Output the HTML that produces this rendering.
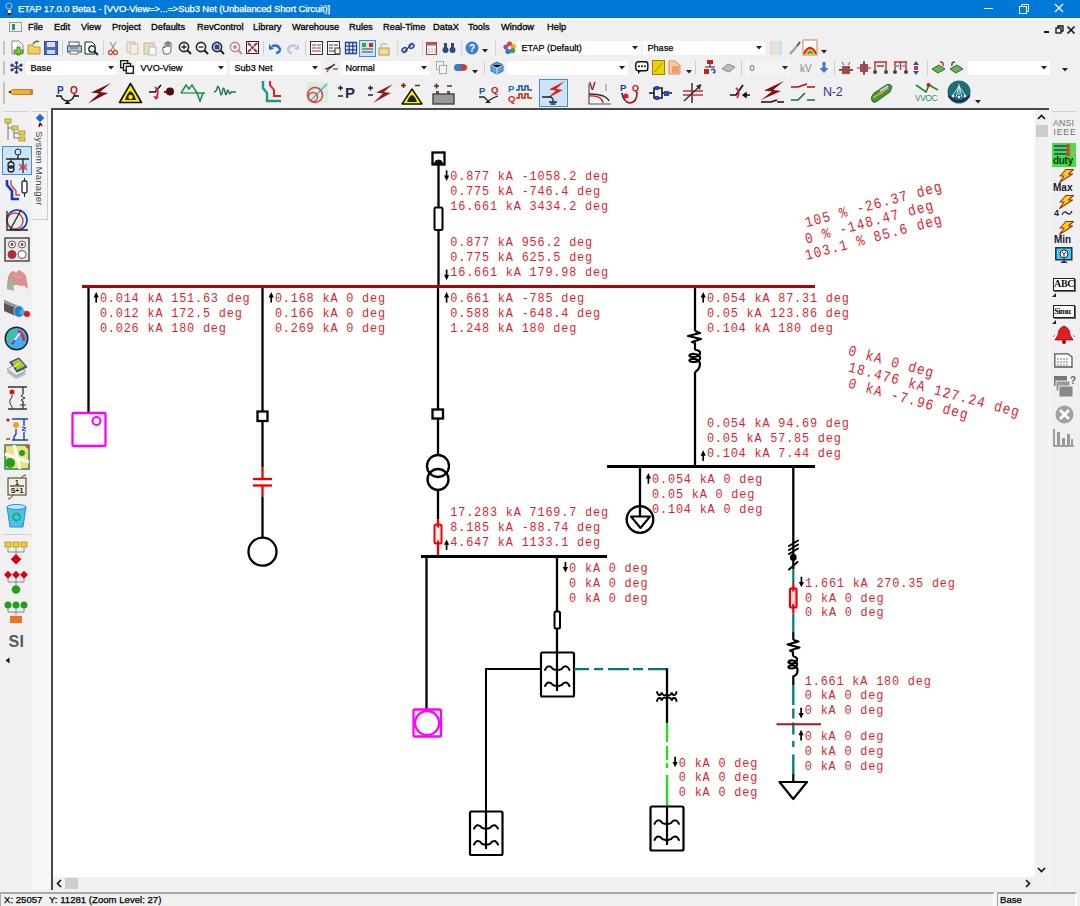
<!DOCTYPE html>
<html><head><meta charset="utf-8">
<style>
*{margin:0;padding:0;box-sizing:border-box}
html,body{width:1080px;height:906px;overflow:hidden;background:#f0f0f0;font-family:"Liberation Sans",sans-serif;position:relative}
.a{position:absolute}
svg{overflow:visible}
</style></head><body>
<div class="a" style="left:0px;top:0px;width:1080px;height:18px;background:#0078d7"></div>
<svg class="a" style="left:4px;top:2px" width="12" height="14" viewBox="0 0 12 14"><circle cx="5" cy="4" r="3" fill="none" stroke="#8fb4e0" stroke-width="1.2"/><rect x="4" y="8" width="3" height="3" fill="#fff"/><rect x="4" y="11" width="3" height="2" fill="#700"/></svg>
<div class="a" style="left:18px;top:2.5px;white-space:nowrap;color:#fff;font-size:9.4px;line-height:12px;letter-spacing:-0.08px;-webkit-text-stroke:0.25px #fff">ETAP 17.0.0 Beta1 - [VVO-View=&gt;...=&gt;Sub3 Net (Unbalanced Short Circuit)]</div>
<div class="a" style="left:984px;top:8px;width:8.5px;height:1.3px;background:#fff"></div>
<svg class="a" style="left:1017.5px;top:2.5px" width="12" height="12" viewBox="0 0 12 12"><rect x="1.5" y="3.5" width="7" height="7" fill="none" stroke="#fff" stroke-width="1"/><path d="M3.5 3.5V1.5H10.5V8.5H8.5" fill="none" stroke="#fff" stroke-width="1"/></svg>
<svg class="a" style="left:1054px;top:3px" width="10" height="10" viewBox="0 0 10 10"><path d="M1 1L9 9M9 1L1 9" stroke="#fff" stroke-width="1.2"/></svg>
<div class="a" style="left:0px;top:18px;width:1080px;height:1.5px;background:#fff"></div>
<svg class="a" style="left:9px;top:22px" width="14" height="11" viewBox="0 0 14 11"><rect x="0.5" y="0.5" width="12" height="9" fill="#eef2ee" stroke="#999"/><rect x="3" y="2" width="3" height="6" fill="#3a8a5a"/></svg>
<div class="a" style="left:28px;top:21.3px;white-space:nowrap;font-size:9.3px;color:#000;line-height:12px;letter-spacing:0px;-webkit-text-stroke:0.3px #000">File</div>
<div class="a" style="left:54px;top:21.3px;white-space:nowrap;font-size:9.3px;color:#000;line-height:12px;letter-spacing:0px;-webkit-text-stroke:0.3px #000">Edit</div>
<div class="a" style="left:81px;top:21.3px;white-space:nowrap;font-size:9.3px;color:#000;line-height:12px;letter-spacing:0px;-webkit-text-stroke:0.3px #000">View</div>
<div class="a" style="left:112px;top:21.3px;white-space:nowrap;font-size:9.3px;color:#000;line-height:12px;letter-spacing:0px;-webkit-text-stroke:0.3px #000">Project</div>
<div class="a" style="left:151px;top:21.3px;white-space:nowrap;font-size:9.3px;color:#000;line-height:12px;letter-spacing:0px;-webkit-text-stroke:0.3px #000">Defaults</div>
<div class="a" style="left:197px;top:21.3px;white-space:nowrap;font-size:9.3px;color:#000;line-height:12px;letter-spacing:0px;-webkit-text-stroke:0.3px #000">RevControl</div>
<div class="a" style="left:253px;top:21.3px;white-space:nowrap;font-size:9.3px;color:#000;line-height:12px;letter-spacing:0px;-webkit-text-stroke:0.3px #000">Library</div>
<div class="a" style="left:292px;top:21.3px;white-space:nowrap;font-size:9.3px;color:#000;line-height:12px;letter-spacing:0px;-webkit-text-stroke:0.3px #000">Warehouse</div>
<div class="a" style="left:349px;top:21.3px;white-space:nowrap;font-size:9.3px;color:#000;line-height:12px;letter-spacing:0px;-webkit-text-stroke:0.3px #000">Rules</div>
<div class="a" style="left:383px;top:21.3px;white-space:nowrap;font-size:9.3px;color:#000;line-height:12px;letter-spacing:0px;-webkit-text-stroke:0.3px #000">Real-Time</div>
<div class="a" style="left:433px;top:21.3px;white-space:nowrap;font-size:9.3px;color:#000;line-height:12px;letter-spacing:0px;-webkit-text-stroke:0.3px #000">DataX</div>
<div class="a" style="left:468px;top:21.3px;white-space:nowrap;font-size:9.3px;color:#000;line-height:12px;letter-spacing:0px;-webkit-text-stroke:0.3px #000">Tools</div>
<div class="a" style="left:501px;top:21.3px;white-space:nowrap;font-size:9.3px;color:#000;line-height:12px;letter-spacing:0px;-webkit-text-stroke:0.3px #000">Window</div>
<div class="a" style="left:547px;top:21.3px;white-space:nowrap;font-size:9.3px;color:#000;line-height:12px;letter-spacing:0px;-webkit-text-stroke:0.3px #000">Help</div>
<div class="a" style="left:1043.5px;top:30.5px;width:5px;height:2px;background:#111"></div>
<svg class="a" style="left:1055px;top:25px" width="10" height="10" viewBox="0 0 10 10"><rect x="1" y="3" width="5" height="5" fill="none" stroke="#111" stroke-width="1.3"/><path d="M3 3V1H8V6H6" fill="none" stroke="#111" stroke-width="1.3"/></svg>
<svg class="a" style="left:1066px;top:25px" width="10" height="10" viewBox="0 0 10 10"><path d="M1.5 1.5L8.5 8.5M8.5 1.5L1.5 8.5" stroke="#111" stroke-width="1.6"/></svg>
<div class="a" style="left:3px;top:41px;width:2px;height:14px;background:#c4c4c4"></div>
<svg class="a" style="left:11px;top:40px" width="13" height="15" viewBox="0 0 13 15"><path d="M1 1H8L12 5V14H1Z" fill="#fff" stroke="#888"/><path d="M6 7H9V10H12V13H9V15H6V13H3V10H6Z" fill="#7acc2a" stroke="#3b6e10" stroke-width="0.8"/></svg>
<svg class="a" style="left:27px;top:40px" width="14" height="15" viewBox="0 0 14 15"><path d="M1 5H6L7 7H13V14H1Z" fill="#f0d060" stroke="#b89a30"/><path d="M6 4Q9 0 12 2" stroke="#2a7a2a" stroke-width="1.4" fill="none"/></svg>
<svg class="a" style="left:44px;top:41px" width="14" height="14" viewBox="0 0 14 14"><rect x="0.5" y="0.5" width="13" height="13" fill="#4a6cc0" stroke="#2c4a9a"/><rect x="3" y="1" width="8" height="5" fill="#dde"/><rect x="3" y="9" width="8" height="4" fill="#cdd"/></svg>
<div class="a" style="left:62px;top:41px;width:1px;height:14px;background:#cfcfcf"></div>
<svg class="a" style="left:67px;top:41px" width="15" height="14" viewBox="0 0 15 14"><rect x="2" y="1" width="10" height="4" fill="#fff" stroke="#555"/><rect x="0.5" y="5" width="14" height="6" fill="#b8c4d4" stroke="#555"/><rect x="3" y="6" width="8" height="2" fill="#4aa0e0"/><rect x="3" y="10" width="8" height="3" fill="#fff" stroke="#555" stroke-width="0.8"/></svg>
<svg class="a" style="left:84px;top:41px" width="15" height="15" viewBox="0 0 15 15"><path d="M1 1H8L11 4V13H1Z" fill="#fff" stroke="#223"/><circle cx="8" cy="8" r="3.2" fill="#cfe" stroke="#223" stroke-width="1.3"/><path d="M10 10L14 14" stroke="#223" stroke-width="1.8"/></svg>
<div class="a" style="left:103px;top:41px;width:1px;height:14px;background:#cfcfcf"></div>
<svg class="a" style="left:108px;top:41px" width="10" height="14" viewBox="0 0 10 14"><path d="M2 1L7 9M8 1L3 9" stroke="#999" stroke-width="1.2"/><circle cx="2.5" cy="11.5" r="2" fill="none" stroke="#d05030" stroke-width="1.3"/><circle cx="7.5" cy="11.5" r="2" fill="none" stroke="#d05030" stroke-width="1.3"/></svg>
<svg class="a" style="left:126px;top:41px" width="13" height="14" viewBox="0 0 13 14"><rect x="1" y="1" width="8" height="10" fill="#f4efe0" stroke="#cbbf99"/><rect x="4" y="3" width="8" height="10" fill="#f4efe0" stroke="#cbbf99"/></svg>
<svg class="a" style="left:143px;top:41px" width="14" height="14" viewBox="0 0 14 14"><rect x="1" y="2" width="10" height="11" fill="#e8dcc0" stroke="#c8b890"/><rect x="6" y="6" width="7" height="8" fill="#f6f6f6" stroke="#bbb"/></svg>
<svg class="a" style="left:161px;top:41px" width="12" height="14" viewBox="0 0 12 14"><path d="M3 13Q1 8 2 6Q3 5 4 7V2Q5 1 6 2V6V1Q7 0 8 1V6V2Q9 1 10 2V9Q10 13 7 13Z" fill="#fff" stroke="#555" stroke-width="0.9"/></svg>
<svg class="a" style="left:178px;top:41px" width="14" height="14" viewBox="0 0 14 14"><circle cx="6" cy="6" r="4.6" fill="#fff" stroke="#223" stroke-width="1.6"/><path d="M9.3 9.3L13 13" stroke="#223" stroke-width="2"/><path d="M3.5 6H8.5M6 3.5V8.5" stroke="#223" stroke-width="1.3"/></svg>
<svg class="a" style="left:195px;top:41px" width="14" height="14" viewBox="0 0 14 14"><circle cx="6" cy="6" r="4.6" fill="#fff" stroke="#223" stroke-width="1.6"/><path d="M9.3 9.3L13 13" stroke="#223" stroke-width="2"/><path d="M3.5 6H8.5" stroke="#223" stroke-width="1.3"/></svg>
<svg class="a" style="left:211px;top:41px" width="14" height="14" viewBox="0 0 14 14"><circle cx="6" cy="6" r="4.6" fill="#fff" stroke="#223" stroke-width="1.6"/><path d="M9.3 9.3L13 13" stroke="#223" stroke-width="2"/><rect x="3.5" y="3.5" width="5" height="5" fill="#2050a0"/></svg>
<svg class="a" style="left:229px;top:41px" width="14" height="14" viewBox="0 0 14 14"><circle cx="6" cy="6" r="4.6" fill="#fff" stroke="#b89090" stroke-width="1.6"/><path d="M9.3 9.3L13 13" stroke="#b89090" stroke-width="2"/><circle cx="6" cy="6" r="2" fill="#e08080"/></svg>
<svg class="a" style="left:246px;top:41px" width="13" height="13" viewBox="0 0 13 13"><rect x="0.5" y="0.5" width="12" height="12" fill="#fff" stroke="#223"/><path d="M2 2L5 5M11 2L8 5M2 11L5 8M11 11L8 8" stroke="#d02020" stroke-width="2"/><circle cx="6.5" cy="6.5" r="1.5" fill="#2050a0"/></svg>
<div class="a" style="left:263px;top:41px;width:1px;height:14px;background:#cfcfcf"></div>
<svg class="a" style="left:269px;top:42px" width="13" height="12" viewBox="0 0 13 12"><path d="M3 4Q9 2 11 7Q11 11 7 11" fill="none" stroke="#3070c0" stroke-width="2.4"/><path d="M0 2L5 7L0 8Z" fill="#3070c0"/></svg>
<svg class="a" style="left:286px;top:42px" width="13" height="12" viewBox="0 0 13 12"><path d="M10 4Q4 2 2 7Q2 11 6 11" fill="none" stroke="#b8c8e0" stroke-width="2.4"/><path d="M13 2L8 7L13 8Z" fill="#b8c8e0"/></svg>
<div class="a" style="left:305px;top:41px;width:1px;height:14px;background:#cfcfcf"></div>
<svg class="a" style="left:310px;top:41px" width="13" height="14" viewBox="0 0 13 14"><rect x="0.5" y="0.5" width="12" height="13" fill="#fff" stroke="#333"/><path d="M2 4H6M2 7H6M2 10H11M7 4H11M7 7H11" stroke="#c02020" stroke-width="1.2"/></svg>
<svg class="a" style="left:327px;top:41px" width="14" height="14" viewBox="0 0 14 14"><rect x="0.5" y="0.5" width="12" height="13" fill="#fff" stroke="#333"/><path d="M2 4H6M2 7H6M2 10H8M7 4H11" stroke="#333" stroke-width="1.2"/><rect x="8" y="7" width="5" height="6" fill="#eee" stroke="#333"/></svg>
<svg class="a" style="left:345px;top:42px" width="12" height="12" viewBox="0 0 12 12"><path d="M0.5 0.5H11.5V11.5H0.5ZM4.2 0.5V11.5M7.8 0.5V11.5M0.5 4.2H11.5M0.5 7.8H11.5" fill="none" stroke="#2040a0" stroke-width="1.3"/></svg>
<svg class="a" style="left:359px;top:40px" width="17" height="17" viewBox="0 0 17 17"><rect x="0.5" y="0.5" width="16" height="16" fill="#cde4f7" stroke="#3d8fd8"/><rect x="3" y="3" width="4" height="4" fill="#3a3" /><rect x="10" y="3" width="4" height="4" fill="#d22"/><path d="M3 9H14M3 12H14" stroke="#444"/></svg>
<svg class="a" style="left:378px;top:42px" width="12" height="13" viewBox="0 0 12 13"><rect x="1" y="6" width="10" height="7" fill="#eedd99" stroke="#bb9955"/><path d="M3 6V3Q6 0 9 3" fill="none" stroke="#bbb" stroke-width="1.4"/></svg>
<div class="a" style="left:397px;top:41px;width:1px;height:14px;background:#cfcfcf"></div>
<svg class="a" style="left:402px;top:42px" width="12" height="12" viewBox="0 0 12 12"><path d="M2 10L10 2" stroke="#3a60a0" stroke-width="1.3"/><rect x="0" y="6" width="5" height="4" rx="2" transform="rotate(-45 2.5 8)" fill="none" stroke="#2a4a90" stroke-width="1.6"/><rect x="7" y="2" width="5" height="4" rx="2" transform="rotate(-45 9.5 4)" fill="none" stroke="#2a4a90" stroke-width="1.6"/></svg>
<div class="a" style="left:422px;top:41px;width:1px;height:14px;background:#cfcfcf"></div>
<svg class="a" style="left:426px;top:42px" width="11" height="13" viewBox="0 0 11 13"><rect x="0.5" y="0.5" width="10" height="12" fill="#fff" stroke="#a04040"/><rect x="0.5" y="0.5" width="10" height="3" fill="#d05050"/><path d="M3 6V11M6 6V11M9 6V11" stroke="#a8a8a8"/></svg>
<svg class="a" style="left:442px;top:42px" width="14" height="12" viewBox="0 0 14 12"><circle cx="3.5" cy="8" r="3" fill="#2a4a80"/><circle cx="10.5" cy="8" r="3" fill="#2a4a80"/><rect x="2" y="1" width="3" height="5" fill="#2a4a80"/><rect x="9" y="1" width="3" height="5" fill="#2a4a80"/></svg>
<div class="a" style="left:461px;top:41px;width:1px;height:14px;background:#cfcfcf"></div>
<svg class="a" style="left:465px;top:41px" width="14" height="14" viewBox="0 0 14 14"><circle cx="7" cy="7" r="6.5" fill="#3d7fd0"/><text x="7" y="11" font-size="10" font-weight="bold" text-anchor="middle" fill="#fff" font-family="Liberation Sans">?</text></svg>
<svg class="a" style="left:482px;top:49px" width="6" height="4" viewBox="0 0 6 4"><path d="M0 0H6L3 3.5Z" fill="#222"/></svg>
<div class="a" style="left:495px;top:41px;width:1px;height:14px;background:#cfcfcf"></div>
<svg class="a" style="left:503px;top:41px" width="13" height="13" viewBox="0 0 13 13"><circle cx="6.5" cy="3" r="2.6" fill="#e04030"/><circle cx="10" cy="5.5" r="2.6" fill="#f0a020"/><circle cx="9.5" cy="9.5" r="2.6" fill="#40a040"/><circle cx="5" cy="10.5" r="2.6" fill="#2080d0"/><circle cx="3" cy="6" r="2.6" fill="#a040c0"/><circle cx="6.5" cy="6.5" r="1.6" fill="#fff"/></svg>
<div class="a" style="left:517px;top:41px;width:124px;height:14px;background:#fff"></div>
<div class="a" style="left:521.5px;top:42.5px;white-space:nowrap;font-size:9.1px;color:#000;line-height:11px;-webkit-text-stroke:0.25px #000">ETAP (Default)</div>
<svg class="a" style="left:632px;top:46.0px" width="6" height="4" viewBox="0 0 6 4"><path d="M0 0H6L3 3.5Z" fill="#222"/></svg>
<div class="a" style="left:643px;top:41px;width:122px;height:14px;background:#fff"></div>
<div class="a" style="left:647.5px;top:42.5px;white-space:nowrap;font-size:9.1px;color:#000;line-height:11px;-webkit-text-stroke:0.25px #000">Phase</div>
<svg class="a" style="left:756px;top:46.0px" width="6" height="4" viewBox="0 0 6 4"><path d="M0 0H6L3 3.5Z" fill="#222"/></svg>
<svg class="a" style="left:770px;top:41px" width="12" height="14" viewBox="0 0 12 14"><defs><linearGradient id="gr1"><stop offset="0" stop-color="#f8d0d0"/><stop offset="0.5" stop-color="#d8f0d0"/><stop offset="1" stop-color="#d0d8f8"/></linearGradient></defs><rect x="0" y="0" width="12" height="14" fill="url(#gr1)"/></svg>
<svg class="a" style="left:788px;top:41px" width="13" height="14" viewBox="0 0 13 14"><path d="M2 13L9 5" stroke="#9aa" stroke-width="2.5"/><path d="M9 5L12 1" stroke="#555" stroke-width="2"/></svg>
<svg class="a" style="left:803px;top:40px" width="14" height="15" viewBox="0 0 14 15"><rect x="0" y="0" width="14" height="15" fill="#fff"/><path d="M1 14Q7 2 13 14" fill="none" stroke="#e02020" stroke-width="2.5"/><path d="M3 14Q7 6 11 14" fill="none" stroke="#f0c000" stroke-width="2"/><path d="M5 14Q7 10 9 14" fill="none" stroke="#20a040" stroke-width="2"/><rect x="0" y="0" width="14" height="15" fill="none" stroke="#c84"/></svg>
<svg class="a" style="left:821px;top:50px" width="6" height="4" viewBox="0 0 6 4"><path d="M0 0H6L3 3.5Z" fill="#222"/></svg>
<div class="a" style="left:3px;top:61px;width:2px;height:14px;background:#c4c4c4"></div>
<svg class="a" style="left:10px;top:61px" width="13" height="13" viewBox="0 0 13 13"><path d="M6.5 1V12M1.5 4L11.5 9M11.5 4L1.5 9" stroke="#2a4070" stroke-width="1.1"/><circle cx="6.5" cy="1.8" r="1.6" fill="#2a4070"/><circle cx="6.5" cy="11.2" r="1.6" fill="#2a4070"/><circle cx="2" cy="4.2" r="1.6" fill="#2a4070"/><circle cx="11" cy="4.2" r="1.6" fill="#2a4070"/><circle cx="2" cy="8.8" r="1.6" fill="#2a4070"/><circle cx="11" cy="8.8" r="1.6" fill="#2a4070"/><circle cx="6.5" cy="6.5" r="1.3" fill="#2a4070"/></svg>
<div class="a" style="left:26px;top:61px;width:91px;height:14px;background:#fff"></div>
<div class="a" style="left:30.5px;top:62.5px;white-space:nowrap;font-size:9.1px;color:#000;line-height:11px;-webkit-text-stroke:0.25px #000">Base</div>
<svg class="a" style="left:108px;top:66.0px" width="6" height="4" viewBox="0 0 6 4"><path d="M0 0H6L3 3.5Z" fill="#222"/></svg>
<svg class="a" style="left:120px;top:60px" width="14" height="14" viewBox="0 0 14 14"><rect x="0.7" y="0.7" width="7" height="7" fill="#fff" stroke="#111" stroke-width="1.3"/><rect x="3.5" y="3.5" width="7" height="7" fill="#fff" stroke="#111" stroke-width="1.3"/><rect x="6.3" y="6.3" width="7" height="7" fill="#fff" stroke="#111" stroke-width="1.3"/></svg>
<div class="a" style="left:136px;top:61px;width:91px;height:14px;background:#fff"></div>
<div class="a" style="left:140.5px;top:62.5px;white-space:nowrap;font-size:9.1px;color:#000;line-height:11px;-webkit-text-stroke:0.25px #000">VVO-View</div>
<svg class="a" style="left:218px;top:66.0px" width="6" height="4" viewBox="0 0 6 4"><path d="M0 0H6L3 3.5Z" fill="#222"/></svg>
<div class="a" style="left:230px;top:61px;width:91px;height:14px;background:#fff"></div>
<div class="a" style="left:234.5px;top:62.5px;white-space:nowrap;font-size:9.1px;color:#000;line-height:11px;-webkit-text-stroke:0.25px #000">Sub3 Net</div>
<svg class="a" style="left:312px;top:66.0px" width="6" height="4" viewBox="0 0 6 4"><path d="M0 0H6L3 3.5Z" fill="#222"/></svg>
<svg class="a" style="left:325px;top:63px" width="13" height="10" viewBox="0 0 13 10"><path d="M0 6H4L10 1M8 6H13" stroke="#333" stroke-width="1.2"/><path d="M2 9L4 5" stroke="#d03030" stroke-width="1.2"/></svg>
<div class="a" style="left:341px;top:61px;width:89px;height:14px;background:#fff"></div>
<div class="a" style="left:345.5px;top:62.5px;white-space:nowrap;font-size:9.1px;color:#000;line-height:11px;-webkit-text-stroke:0.25px #000">Normal</div>
<svg class="a" style="left:421px;top:66.0px" width="6" height="4" viewBox="0 0 6 4"><path d="M0 0H6L3 3.5Z" fill="#222"/></svg>
<svg class="a" style="left:436px;top:61px" width="11" height="13" viewBox="0 0 11 13"><rect x="0.5" y="0.5" width="7" height="8" fill="#f0f0f0" stroke="#aaa"/><rect x="3.5" y="4.5" width="7" height="8" fill="#f6f6f6" stroke="#aaa"/></svg>
<svg class="a" style="left:454px;top:63px" width="14" height="9" viewBox="0 0 14 9"><rect x="0" y="1" width="12" height="7" rx="3.5" fill="#3a7ac8"/><circle cx="10" cy="4.5" r="3" fill="#e03030"/></svg>
<svg class="a" style="left:472px;top:70px" width="6" height="4" viewBox="0 0 6 4"><path d="M0 0H6L3 3.5Z" fill="#222"/></svg>
<div class="a" style="left:484px;top:61px;width:1px;height:14px;background:#cfcfcf"></div>
<svg class="a" style="left:490px;top:61px" width="14" height="14" viewBox="0 0 14 14"><path d="M7 1L13 4V10L7 13L1 10V4Z" fill="#5aa0e0" stroke="#2a70c0"/><path d="M1 4L7 7L13 4M7 7V13" stroke="#fff" stroke-width="0.8"/></svg>
<div class="a" style="left:507px;top:61px;width:121px;height:14px;background:#fff"></div>
<svg class="a" style="left:619px;top:66.0px" width="6" height="4" viewBox="0 0 6 4"><path d="M0 0H6L3 3.5Z" fill="#222"/></svg>
<svg class="a" style="left:635px;top:61px" width="14" height="13" viewBox="0 0 14 13"><rect x="0.8" y="0.8" width="12" height="9" rx="2.5" fill="#fff" stroke="#111" stroke-width="1.4"/><path d="M3 10L3 13L6 10" fill="#111"/><circle cx="4" cy="5.3" r="1" fill="#111"/><circle cx="7" cy="5.3" r="1" fill="#111"/><circle cx="10" cy="5.3" r="1" fill="#111"/></svg>
<svg class="a" style="left:652px;top:60px" width="13" height="15" viewBox="0 0 13 15"><rect x="0.5" y="0.5" width="12" height="14" fill="#f0d000" stroke="#a08000"/><path d="M3 12L10 3" stroke="#a08000"/></svg>
<svg class="a" style="left:668px;top:60px" width="13" height="15" viewBox="0 0 13 15"><path d="M1 1H7L12 5V14H1Z" fill="#f8c8a0" stroke="#e09060"/><rect x="4" y="6" width="7" height="7" fill="#f0a070"/></svg>
<svg class="a" style="left:686px;top:70px" width="6" height="4" viewBox="0 0 6 4"><path d="M0 0H6L3 3.5Z" fill="#222"/></svg>
<div class="a" style="left:695px;top:61px;width:1px;height:14px;background:#cfcfcf"></div>
<svg class="a" style="left:703px;top:60px" width="14" height="15" viewBox="0 0 14 15"><rect x="4" y="0" width="6" height="4" fill="#c02020"/><path d="M7 4V7M2 7H12" stroke="#222"/><rect x="1" y="9" width="5" height="5" fill="#c02020"/><path d="M8 10Q12 8 12 12L10 13" fill="none" stroke="#2050b0" stroke-width="1.5"/></svg>
<svg class="a" style="left:721px;top:63px" width="15" height="10" viewBox="0 0 15 10"><path d="M1 6L7 1L14 4L8 9Z" fill="#bbb" stroke="#888"/></svg>
<div class="a" style="left:741px;top:61px;width:1px;height:14px;background:#cfcfcf"></div>
<div class="a" style="left:745px;top:61px;width:46px;height:14px;background:#f4f4f4"></div>
<div class="a" style="left:749.5px;top:62.5px;white-space:nowrap;font-size:9.1px;color:#777;line-height:11px;-webkit-text-stroke:0.25px #777">0</div>
<svg class="a" style="left:782px;top:66.0px" width="6" height="4" viewBox="0 0 6 4"><path d="M0 0H6L3 3.5Z" fill="#222"/></svg>
<div class="a" style="left:800px;top:63px;white-space:nowrap;font-size:10px;color:#888;line-height:11px">kV</div>
<svg class="a" style="left:819px;top:62px" width="10" height="12" viewBox="0 0 10 12"><path d="M5 0V7" stroke="#4a70e0" stroke-width="3"/><path d="M0.5 6H9.5L5 11Z" fill="#4a70e0"/></svg>
<div class="a" style="left:834px;top:61px;width:1px;height:14px;background:#cfcfcf"></div>
<svg class="a" style="left:839px;top:61px" width="14" height="14" viewBox="0 0 14 14"><path d="M3 1L5 4M11 1L9 4" stroke="#3050c0"/><rect x="3" y="5" width="8" height="3" fill="#c04040"/><path d="M0 9H14" stroke="#333" stroke-width="1.5"/><rect x="3" y="10" width="8" height="3" fill="#c04040"/></svg>
<svg class="a" style="left:857px;top:61px" width="14" height="14" viewBox="0 0 14 14"><path d="M7 0V14" stroke="#333" stroke-width="1.5"/><rect x="3" y="3" width="3" height="8" fill="#c04040"/><rect x="8" y="3" width="3" height="8" fill="#c04040"/><path d="M0 7H3M11 7H14" stroke="#3050c0"/></svg>
<svg class="a" style="left:873px;top:61px" width="15" height="14" viewBox="0 0 15 14"><path d="M1 1H14M2 1V9M13 1V9M4 5H11" stroke="#c03030" stroke-width="1.4"/><circle cx="2" cy="11" r="2" fill="#444"/><circle cx="13" cy="11" r="2" fill="#444"/></svg>
<svg class="a" style="left:893px;top:61px" width="15" height="14" viewBox="0 0 15 14"><path d="M1 1H14M2 1V9M13 1V9M7.5 1V9" stroke="#c03030" stroke-width="1.4"/><path d="M3 5H6M9 5H12" stroke="#3050c0"/><circle cx="2" cy="11" r="2" fill="#444"/><circle cx="13" cy="11" r="2" fill="#444"/></svg>
<svg class="a" style="left:912px;top:61px" width="8" height="14" viewBox="0 0 8 14"><path d="M4 0L7 4H1Z M4 14L7 10H1Z" fill="#3050c0"/><rect x="2" y="5" width="4" height="4" fill="#c04040"/></svg>
<div class="a" style="left:927px;top:61px;width:1px;height:14px;background:#cfcfcf"></div>
<svg class="a" style="left:931px;top:61px" width="15" height="14" viewBox="0 0 15 14"><path d="M1 8L8 4L14 8L7 12Z" fill="#6cb060" stroke="#2a6a2a"/><path d="M9 1Q13 1 12 5" fill="none" stroke="#c03030" stroke-width="1.5"/></svg>
<svg class="a" style="left:949px;top:61px" width="15" height="14" viewBox="0 0 15 14"><path d="M1 8L8 4L14 8L7 12Z" fill="#6cb060" stroke="#2a6a2a"/><path d="M6 1Q2 1 3 5" fill="none" stroke="#3050a0" stroke-width="1.5"/></svg>
<div class="a" style="left:968px;top:61px;width:82px;height:14px;background:#fff"></div>
<svg class="a" style="left:1041px;top:66.0px" width="6" height="4" viewBox="0 0 6 4"><path d="M0 0H6L3 3.5Z" fill="#222"/></svg>
<svg class="a" style="left:1062px;top:68px" width="6" height="4" viewBox="0 0 6 4"><path d="M0 0H6L3 3.5Z" fill="#222"/></svg>
<div class="a" style="left:3px;top:82px;width:2px;height:22px;background:#c4c4c4"></div>
<svg class="a" style="left:8px;top:88px" width="26" height="8" viewBox="0 0 26 8"><path d="M0.5 4L5 1.5H24V6.5H5Z" fill="#f0b030" stroke="#b07010" stroke-width="0.8"/><path d="M0.5 4L3 2.8V5.2Z" fill="#222"/><rect x="22" y="1.5" width="3" height="5" fill="#c08060"/></svg>
<svg class="a" style="left:55px;top:84px" width="26" height="21" viewBox="0 0 26 21"><text x="2" y="10" font-family="Liberation Sans" font-weight="bold" font-size="10" fill="#1a3a9a">P</text><text x="15" y="10" font-family="Liberation Sans" font-weight="bold" font-size="10" fill="#b01020">Q</text><path d="M1 12H6Q8 17 12.5 17Q17 17 19 12H24" fill="none" stroke="#111" stroke-width="1.4"/><path d="M9.5 20H15.5L12.5 16.5Z" fill="#111"/></svg>
<svg class="a" style="left:87px;top:82px" width="24" height="22" viewBox="0 0 24 22"><path d="M24 1L4 10.5L12 11.5L1 21.5L21 11L13 10Z" fill="#7a1010"/></svg>
<svg class="a" style="left:118px;top:82px" width="25" height="22" viewBox="0 0 25 22"><path d="M12.5 1.5L23.5 20.5H1.5Z" fill="#f8f000" stroke="#111" stroke-width="1.6" stroke-linejoin="round"/><path d="M7 18Q9 11 12.5 9Q16 11 18 18Z" fill="#222"/><circle cx="12.5" cy="15" r="2.2" fill="#f8f000"/></svg>
<svg class="a" style="left:148px;top:82px" width="27" height="20" viewBox="0 0 27 20"><path d="M1 10H7L13 3" stroke="#111" stroke-width="1.6" fill="none"/><path d="M7 5Q12 9 8 16" stroke="#e02030" stroke-width="1.8" fill="none"/><path d="M5 14L8 18L11 15Z" fill="#e02030"/><path d="M16 10H19" stroke="#111" stroke-width="1.6"/><circle cx="22" cy="9.5" r="4" fill="#5a0a0a"/></svg>
<svg class="a" style="left:180px;top:83px" width="26" height="19" viewBox="0 0 26 19"><path d="M1 10L6 2L9 6L12 2L17 10H25M17 10L20 18L23 10L25 10" fill="none" stroke="#1a8a4a" stroke-width="1.5"/><path d="M1 10H17" stroke="#1a8a4a" stroke-width="1.2"/></svg>
<svg class="a" style="left:213px;top:83px" width="24" height="17" viewBox="0 0 24 17"><path d="M1 9Q3 9 4 6Q5 0 7 8Q8 16 9.5 8Q10.5 2 12 9Q13 14 14 9Q15 5 16 10Q17 12 18 9L23 9" fill="none" stroke="#1a7a4a" stroke-width="1.4"/></svg>
<svg class="a" style="left:261px;top:80px" width="22" height="24" viewBox="0 0 22 24"><path d="M2 1V8L6 13V21H20" fill="none" stroke="#1a9a8a" stroke-width="2.4"/><path d="M9 1V5L13 10V16H20" fill="none" stroke="#e02020" stroke-width="2"/></svg>
<svg class="a" style="left:306px;top:81px" width="23" height="23" viewBox="0 0 23 23"><rect x="1" y="1" width="21" height="21" fill="#d8eede"/><path d="M4 20L21 3" stroke="#4ab0d0" stroke-width="1.2"/><circle cx="9" cy="14" r="7.5" fill="none" stroke="#e04040" stroke-width="1.6"/><circle cx="7" cy="16" r="4.5" fill="none" stroke="#e04040" stroke-width="1.4"/></svg>
<svg class="a" style="left:337px;top:84px" width="23" height="15" viewBox="0 0 23 15"><path d="M1 4H6M3.5 1.5V6.5M1 12H6" stroke="#223" stroke-width="1.4"/><text x="8" y="13.5" font-family="Liberation Sans" font-weight="bold" font-size="15" fill="#1e2e4e">P</text></svg>
<svg class="a" style="left:367px;top:82px" width="26" height="22" viewBox="0 0 26 22"><path d="M1 6H6M3.5 3.5V8.5M1 13H6" stroke="#223" stroke-width="1.4"/><path d="M26 2L9 10.5L16 11.5L6 21L24 11L17 10Z" fill="#8a2020"/></svg>
<svg class="a" style="left:400px;top:82px" width="24" height="23" viewBox="0 0 24 23"><path d="M1 3.5H6M3.5 1V6M15 3.5H20" stroke="#6a2a10" stroke-width="1.6"/><path d="M12 7L22 22H2Z" fill="#f8f000" stroke="#111" stroke-width="1.4" stroke-linejoin="round"/><path d="M7 20Q9 14 12 13Q15 14 17 20Z" fill="#222"/></svg>
<svg class="a" style="left:432px;top:82px" width="23" height="23" viewBox="0 0 23 23"><path d="M2 4H7M4.5 1.5V6.5M15 4H20" stroke="#6a2a10" stroke-width="1.6"/><rect x="4" y="9" width="3" height="3" fill="#555"/><rect x="15" y="9" width="3" height="3" fill="#555"/><rect x="1" y="12" width="21" height="10" fill="#999" stroke="#444" stroke-width="1.4"/></svg>
<svg class="a" style="left:478px;top:84px" width="23" height="20" viewBox="0 0 23 20"><text x="1" y="10" font-family="Liberation Sans" font-weight="bold" font-size="9.5" fill="#1a4aaa">P</text><text x="13" y="9" font-family="Liberation Sans" font-weight="bold" font-size="9.5" fill="#c01020">Q</text><path d="M1 13H6L10 17L15 14L20 12" fill="none" stroke="#222" stroke-width="1.3"/><path d="M7 19H13L10 16Z" fill="#222"/></svg>
<svg class="a" style="left:508px;top:83px" width="25" height="20" viewBox="0 0 25 20"><rect x="7" y="1" width="17" height="18" fill="#eef4dd"/><text x="0" y="9" font-family="Liberation Sans" font-weight="bold" font-size="9.5" fill="#1a6acc">P</text><text x="0" y="19" font-family="Liberation Sans" font-weight="bold" font-size="9.5" fill="#e02030">Q</text><path d="M8 7H11V3H14V7H17V3H20V7H24" fill="none" stroke="#1a50b0" stroke-width="1.5"/><path d="M8 15H11V11H14V15H17V11H20V15H24" fill="none" stroke="#d02020" stroke-width="1.5"/></svg>
<div class="a" style="left:538.5px;top:79px;width:29px;height:28px;background:#cce4f7;border:1px solid #3d8fd8"></div>
<svg class="a" style="left:540px;top:80px" width="27" height="26" viewBox="0 0 27 26"><path d="M25 1L9 9.5L16 10.5L7 18.5L23 10L16 9Z" fill="#e01818"/><path d="M2 17H11L13 19M13 19V22M9 22H17M10.5 24H15.5" fill="none" stroke="#222" stroke-width="1.3"/></svg>
<svg class="a" style="left:588px;top:81px" width="24" height="24" viewBox="0 0 24 24"><text x="1" y="9" font-family="Liberation Sans" font-weight="bold" font-size="10" fill="#a01010">V</text><path d="M1 3V23H23" fill="none" stroke="#555" stroke-width="1.2"/><path d="M1 13Q18 13 21 20" fill="none" stroke="#333" stroke-width="1.4"/><path d="M1 15Q14 14 15 22" fill="none" stroke="#d02030" stroke-width="1.4"/><path d="M18 3V10" stroke="#888"/></svg>
<svg class="a" style="left:620px;top:82px" width="21" height="22" viewBox="0 0 21 22"><text x="0" y="9" font-family="Liberation Sans" font-weight="bold" font-size="9.5" fill="#1a3a9a">P</text><text x="12" y="9" font-family="Liberation Sans" font-weight="bold" font-size="9" fill="#a01020">Q</text><path d="M2 11Q3 20 10 21Q17 20 17 11" fill="none" stroke="#a01020" stroke-width="1.6"/><path d="M2 11Q3 16 5 18" fill="none" stroke="#1a3a9a" stroke-width="1.6"/><circle cx="6" cy="14" r="2.5" fill="#ff1010"/></svg>
<svg class="a" style="left:648px;top:85px" width="26" height="16" viewBox="0 0 26 16"><path d="M1 8H6M6 3H14V13H6ZM14 8H24" fill="none" stroke="#111" stroke-width="1.5"/><rect x="7" y="1" width="4" height="4" fill="#2a4ac0"/><rect x="7" y="11" width="4" height="4" fill="#2a4ac0"/><rect x="16" y="6" width="5" height="5" fill="#2a4ac0"/></svg>
<svg class="a" style="left:682px;top:82px" width="22" height="22" viewBox="0 0 22 22"><path d="M10 1V21" stroke="#333" stroke-width="1.5"/><path d="M1 9H21M1 13H21" stroke="#c03040" stroke-width="1.4"/><path d="M2 19L19 3" stroke="#333" stroke-width="1.4"/><path d="M19 2L14 4L18 8Z" fill="#333"/></svg>
<svg class="a" style="left:729px;top:83px" width="22" height="17" viewBox="0 0 22 17"><path d="M1 12H7L14 2" stroke="#111" stroke-width="1.7" fill="none"/><path d="M7 5Q12 9 8 15" stroke="#e02030" stroke-width="1.8" fill="none"/><path d="M14 12H21M14 12L17 10V14Z" stroke="#111" stroke-width="1.5" fill="#111"/></svg>
<svg class="a" style="left:759px;top:80px" width="26" height="24" viewBox="0 0 26 24"><path d="M25 1L5 10.5L13 11.5L2 20L22 11L14 10Z" fill="#8a0a0a"/><path d="M2 22H12L18 20M18 22H25" stroke="#111" stroke-width="1.6" fill="none"/></svg>
<svg class="a" style="left:790px;top:83px" width="26" height="20" viewBox="0 0 26 20"><path d="M1 4H8L17 1M17 4H25" stroke="#b01010" stroke-width="1.6" fill="none"/><path d="M1 17H8L15 10M17 17H25" stroke="#1a6a4a" stroke-width="1.6" fill="none"/></svg>
<div class="a" style="left:823px;top:86px;white-space:nowrap;font-size:12.5px;color:#2a3a8a;line-height:13px;letter-spacing:-0.2px">N-2</div>
<svg class="a" style="left:869px;top:82px" width="24" height="22" viewBox="0 0 24 22"><path d="M3 19Q1 15 5 11L17 3Q22 1 23 5L21 10L7 20Q4 21 3 19Z" fill="#3a9a3a" stroke="#1a5a1a" stroke-width="0.8"/><path d="M4 16L19 6" stroke="#f0a040" stroke-width="1.6"/><path d="M11 9L19 4" stroke="#bde" stroke-width="1.5"/></svg>
<svg class="a" style="left:915px;top:82px" width="25" height="20" viewBox="0 0 25 20"><path d="M1 3L11 10L14 3L23 8" stroke="#1a8a3a" stroke-width="1.6" fill="none"/><circle cx="13.5" cy="3" r="2" fill="#e01010"/><text x="0" y="19" font-family="Liberation Sans" font-size="8.5" fill="#2a8a8a" letter-spacing="-0.5">VVOC</text></svg>
<svg class="a" style="left:947px;top:80px" width="24" height="24" viewBox="0 0 24 24"><circle cx="12" cy="12" r="11.5" fill="#1e6e78"/><path d="M1 14Q12 26 23 14V17Q12 28 1 17Z" fill="#202a60"/><path d="M12 4V15M12 6L6 15M12 6L18 15M12 6L9 17M12 6L15 17" stroke="#d8eef0" stroke-width="0.9"/><circle cx="6" cy="16" r="1.3" fill="#fff"/><circle cx="18" cy="16" r="1.3" fill="#fff"/><circle cx="12" cy="17" r="1.3" fill="#fff"/></svg>
<svg class="a" style="left:975px;top:100px" width="6" height="4" viewBox="0 0 6 4"><path d="M0 0H6L3 3.5Z" fill="#222"/></svg>
<div class="a" style="left:51px;top:108px;width:998px;height:2px;background:#484848"></div>
<div class="a" style="left:51px;top:108px;width:2px;height:782px;background:#484848"></div>
<div class="a" style="left:53px;top:110px;width:982px;height:767px;background:#fff"></div>
<div class="a" style="left:1035px;top:110px;width:14px;height:767px;background:#f0f0f0"></div>
<svg class="a" style="left:1037px;top:114px" width="9" height="6" viewBox="0 0 9 6"><path d="M1 5L4.5 1.5L8 5" fill="none" stroke="#111" stroke-width="1.6"/></svg>
<div class="a" style="left:1036px;top:124.5px;width:12px;height:12px;background:#cdcdcd"></div>
<svg class="a" style="left:1037px;top:867px" width="9" height="6" viewBox="0 0 9 6"><path d="M1 1L4.5 4.5L8 1" fill="none" stroke="#111" stroke-width="1.6"/></svg>
<div class="a" style="left:53px;top:877px;width:982px;height:13px;background:#f0f0f0"></div>
<svg class="a" style="left:56px;top:879px" width="6" height="9" viewBox="0 0 6 9"><path d="M5 1L1.5 4.5L5 8" fill="none" stroke="#111" stroke-width="1.6"/></svg>
<div class="a" style="left:65px;top:878px;width:13px;height:11px;background:#cdcdcd"></div>
<svg class="a" style="left:1025px;top:879px" width="6" height="9" viewBox="0 0 6 9"><path d="M1 1L4.5 4.5L1 8" fill="none" stroke="#111" stroke-width="1.6"/></svg>
<div class="a" style="left:1035px;top:877px;width:14px;height:13px;background:#f0f0f0"></div>
<div class="a" style="left:32px;top:110px;width:19px;height:780px;background:#f6f6f6"></div>
<div class="a" style="left:4px;top:111px;width:24px;height:1px;background:#cfcfcf"></div>
<div class="a" style="left:32px;top:111px;width:16px;height:109px;background:#f4f4f4;border:1px solid #cfcfcf;border-left:none"></div>
<svg class="a" style="left:34px;top:114px" width="12" height="14" viewBox="0 0 12 14"><rect x="3" y="1" width="6" height="6" transform="rotate(45 6 4)" fill="#2a6ad0"/><path d="M6 9L5 13M6 9L8 12" stroke="#700" stroke-width="1.4"/></svg>
<div class="a" style="left:34px;top:131px;width:12px;height:75px;"><div style="transform:rotate(90deg);transform-origin:0 0;position:absolute;left:11px;top:0;white-space:nowrap;font-size:9.6px;color:#444;line-height:11px;letter-spacing:0.15px">System Manager</div></div>
<svg class="a" style="left:4px;top:118px" width="26" height="25" viewBox="0 0 26 25"><rect x="1" y="1" width="6" height="4" fill="#e8d040" stroke="#998020" stroke-width="0.7"/><path d="M4 5V22M4 10H10M10 10V20M10 15H16M10 20H16" stroke="#777" fill="none"/><rect x="8" y="8" width="6" height="4" fill="#e8d040" stroke="#998020" stroke-width="0.7"/><rect x="15" y="13" width="6" height="4" fill="#e8d040" stroke="#998020" stroke-width="0.7"/><rect x="15" y="19" width="6" height="4" fill="#e8d040" stroke="#998020" stroke-width="0.7"/></svg>
<div class="a" style="left:1.5px;top:146px;width:30px;height:29px;background:#cce4f7;border:1px solid #3d8fd8"></div>
<svg class="a" style="left:3px;top:147px" width="27" height="27" viewBox="0 0 27 27"><circle cx="15" cy="5" r="3" fill="none" stroke="#222"/><path d="M15 8V12M3 12H26M8 12V15M20 12V26" stroke="#222" stroke-width="1.3"/><circle cx="8" cy="18" r="3" fill="none" stroke="#222" stroke-width="1.3"/><circle cx="8" cy="22" r="3" fill="none" stroke="#222" stroke-width="1.3"/><path d="M16 17L24 23M24 17L16 23M17 20H24" stroke="#d04050" stroke-width="1.2"/></svg>
<svg class="a" style="left:4px;top:177px" width="26" height="25" viewBox="0 0 26 25"><rect x="3" y="2" width="22" height="22" fill="#eef6ff"/><path d="M3 3V8L8 14V22H15" stroke="#2030d0" stroke-width="2.6" fill="none"/><path d="M7 3V8L12 14V18H16" stroke="#e04020" stroke-width="1.4" fill="none"/><rect x="18" y="4" width="5" height="12" rx="1.5" fill="#fff" stroke="#222" stroke-width="1.3"/><path d="M20.5 1V4M20.5 16V20" stroke="#222"/></svg>
<svg class="a" style="left:4px;top:207px" width="26" height="26" viewBox="0 0 26 26"><rect x="2" y="2" width="22" height="22" fill="#dff2ee"/><circle cx="13" cy="13" r="10" fill="none" stroke="#2030c0" stroke-width="1.6"/><circle cx="11" cy="14" r="8" fill="none" stroke="#e04040" stroke-width="1.4"/><path d="M6 23L17 3M3 4V23H24" stroke="#222" stroke-width="1.3" fill="none"/></svg>
<svg class="a" style="left:4px;top:237px" width="26" height="25" viewBox="0 0 26 25"><rect x="1" y="1" width="24" height="23" fill="#e8e8e8" stroke="#333" stroke-width="1.3"/><circle cx="8" cy="7.5" r="3.5" fill="#fff" stroke="#555"/><circle cx="18" cy="7.5" r="3.5" fill="#fff" stroke="#555"/><circle cx="8" cy="17.5" r="4" fill="#d02020" stroke="#555"/><circle cx="18" cy="17.5" r="4" fill="#fff" stroke="#555"/><circle cx="8" cy="7.5" r="1.4" fill="#c02020"/><circle cx="18" cy="7.5" r="1.4" fill="#c02020"/></svg>
<svg class="a" style="left:5px;top:267px" width="24" height="25" viewBox="0 0 24 25"><path d="M2 22Q2 10 5 6Q8 2 11 6Q14 1 17 5Q21 6 22 14L23 22Q19 17 15 19Q10 16 7 20Q5 24 2 22Z" fill="#d89090"/><path d="M3 22Q3 14 7 10L9 24Z" fill="#8cc090"/><path d="M9 8Q12 12 16 10" stroke="#e8b0b0" fill="none"/></svg>
<svg class="a" style="left:3px;top:298px" width="27" height="21" viewBox="0 0 27 21"><path d="M1 2L15 8V19L1 13Z" fill="#555"/><path d="M1 2L15 8V11L1 5Z" fill="#999"/><ellipse cx="16" cy="13.5" rx="5" ry="5.8" fill="#1a80c8" stroke="#ddd" stroke-width="0.8"/><path d="M17 13L23 16" stroke="#4ab0e0" stroke-width="5"/><circle cx="24" cy="16" r="3" fill="#f01010"/></svg>
<svg class="a" style="left:4px;top:326px" width="25" height="25" viewBox="0 0 25 25"><circle cx="12.5" cy="12.5" r="12" fill="#223"/><circle cx="12.5" cy="12.5" r="10.5" fill="#40b0f0"/><path d="M5 15Q6 7 11 5" stroke="#40d040" stroke-width="2.8" fill="none"/><path d="M14 5Q19 7 20 15" stroke="#e02040" stroke-width="2.8" fill="none"/><path d="M9 16L16 7" stroke="#fff" stroke-width="1.6"/><path d="M8 18L11 14" stroke="#823" stroke-width="1.6"/></svg>
<svg class="a" style="left:4px;top:357px" width="25" height="22" viewBox="0 0 25 22"><path d="M2 15L12 11L23 17L12 22Z" fill="#bbb"/><path d="M3 12L12 7L22 14L12 19Z" fill="#d8e8f0" stroke="#888" stroke-width="0.7"/><path d="M6 5L15 1L23 10L13 15Z" fill="#2a6ab0" stroke="#223" stroke-width="0.8"/><path d="M8 5L15 2L21 9L13 13Z" fill="#a8c830"/><path d="M9 10L16 6" stroke="#f0e020" stroke-width="2"/><path d="M6 5L9 9" stroke="#4040c0" stroke-width="1.5"/></svg>
<svg class="a" style="left:5px;top:385px" width="24" height="26" viewBox="0 0 24 26"><path d="M3 2H22M3 24H22M18 2V9M18 16V24" stroke="#333" stroke-width="1.3"/><path d="M18 9L16 11L20 13L16 15L18 16" stroke="#333" fill="none"/><circle cx="7" cy="7" r="2.5" fill="#e01010"/><path d="M7 10V12L5 15V19L7 21V24" stroke="#333" fill="none"/><path d="M15 20H21" stroke="#333"/></svg>
<svg class="a" style="left:4px;top:416px" width="26" height="26" viewBox="0 0 26 26"><path d="M2 4L4 2L6 4L4 6Z" fill="#c02020"/><path d="M2 23H6" stroke="#c02020" stroke-width="1.4"/><path d="M8 3H24M8 24H24M20 3V10M20 16V24M12 13V18L10 21V24" stroke="#2040b0" stroke-width="1.4" fill="none"/><circle cx="12" cy="9" r="3" fill="#f0a020"/><path d="M18 11L22 12L18 14L22 15" stroke="#2040b0" fill="none"/></svg>
<svg class="a" style="left:4px;top:444px" width="26" height="26" viewBox="0 0 26 26"><rect x="1" y="1" width="24" height="24" fill="#f0e080" stroke="#2a7a3a" stroke-width="1.4"/><path d="M1 10L25 18M10 1L16 25" stroke="#fff" stroke-width="3"/><circle cx="6" cy="19" r="5" fill="#20a020"/><circle cx="18" cy="9" r="3" fill="#20a020"/><path d="M20 1H25V6Z" fill="#e04040"/></svg>
<svg class="a" style="left:7px;top:474px" width="21" height="26" viewBox="0 0 21 26"><rect x="1" y="4" width="18" height="17" fill="#f4f0dc" stroke="#333"/><path d="M14 4Q16 1 19 1M6 21Q4 25 1 25" stroke="#a02020" fill="none"/><text x="10" y="11" font-size="7" text-anchor="middle" font-family="Liberation Sans" font-weight="bold" fill="#111">1</text><path d="M3 12H17" stroke="#111"/><text x="10" y="19" font-size="7" text-anchor="middle" font-family="Liberation Sans" font-weight="bold" fill="#111">S+1</text></svg>
<svg class="a" style="left:6px;top:504px" width="21" height="24" viewBox="0 0 21 24"><path d="M1 3H20L17 23H4Z" fill="#4ac0f0" stroke="#2a90c8"/><ellipse cx="10.5" cy="3" rx="9.5" ry="2.5" fill="#bfe8fa" stroke="#2a90c8"/><circle cx="10.5" cy="13" r="3.5" fill="none" stroke="#20b060" stroke-width="2"/></svg>
<div class="a" style="left:2px;top:534px;width:29px;height:1px;background:#cfcfcf"></div>
<svg class="a" style="left:1px;top:541px" width="30" height="23" viewBox="0 0 30 23"><rect x="4" y="1" width="6" height="5" fill="#f0d020" stroke="#a08020" stroke-width="0.7"/><rect x="12" y="1" width="6" height="5" fill="#f0d020" stroke="#a08020" stroke-width="0.7"/><rect x="20" y="1" width="6" height="5" fill="#f0d020" stroke="#a08020" stroke-width="0.7"/><path d="M7 7V11H23V7M15 7V14" stroke="#888" fill="none"/><rect x="11.3" y="14.5" width="7.4" height="7.4" transform="rotate(45 15 18.2)" fill="#d80010"/></svg>
<svg class="a" style="left:1px;top:571px" width="30" height="23" viewBox="0 0 30 23"><rect x="4.2" y="1" width="5.6" height="5.6" transform="rotate(45 7 3.8)" fill="#d80010"/><rect x="12.2" y="1" width="5.6" height="5.6" transform="rotate(45 15 3.8)" fill="#d80010"/><rect x="20.2" y="1" width="5.6" height="5.6" transform="rotate(45 23 3.8)" fill="#d80010"/><path d="M7 7V11H23V7M15 7V14" stroke="#888" fill="none"/><circle cx="15" cy="18.5" r="4.3" fill="#20a020"/></svg>
<svg class="a" style="left:1px;top:601px" width="30" height="23" viewBox="0 0 30 23"><circle cx="7" cy="4" r="3.5" fill="#20a020"/><circle cx="15" cy="4" r="3.5" fill="#20a020"/><circle cx="23" cy="4" r="3.5" fill="#20a020"/><path d="M7 7V11H23V7M15 7V14" stroke="#888" fill="none"/><rect x="9" y="15" width="12" height="7" fill="#f07020"/></svg>
<div class="a" style="left:8.5px;top:634px;white-space:nowrap;font-size:16px;font-weight:bold;color:#5a5a5a;line-height:16px;letter-spacing:0.3px">SI</div>
<svg class="a" style="left:5px;top:657px" width="5" height="7" viewBox="0 0 5 7"><path d="M4.5 0.5V6.5L0.5 3.5Z" fill="#111"/></svg>
<div class="a" style="left:1049px;top:110px;width:1px;height:780px;background:#fafafa"></div>
<div class="a" style="left:1052px;top:111px;width:24px;height:1px;background:#cfcfcf"></div>
<div class="a" style="left:1053px;top:118.5px;white-space:nowrap;font-size:8.7px;color:#707070;line-height:9px;letter-spacing:0.2px">ANSI</div>
<div class="a" style="left:1053.5px;top:128px;white-space:nowrap;font-size:8.7px;color:#707070;line-height:9px;letter-spacing:0.8px">IEEE</div>
<div class="a" style="left:1052px;top:142.5px;width:24px;height:24px;background:#42e042"></div>
<svg class="a" style="left:1052px;top:142.5px" width="24" height="15" viewBox="0 0 24 15"><path d="M2 3H15M2 7H15M2 11H15" stroke="#333a7a" stroke-width="1.6"/><circle cx="16" cy="3" r="2" fill="#d04020"/><circle cx="16" cy="7" r="2" fill="#d04020"/><circle cx="16" cy="11" r="2" fill="#d04020"/><circle cx="21" cy="10" r="2" fill="#f080a0"/></svg>
<div class="a" style="left:1053px;top:156px;white-space:nowrap;font-size:10px;font-weight:bold;color:#113311;line-height:10px;letter-spacing:-0.3px">duty</div>
<svg class="a" style="left:1056px;top:168.5px" width="18" height="14" viewBox="0 0 18 14"><path d="M10 0.5H17.5L12.5 5H16.5L3.5 13.5L8 7H4Z" fill="#f5d020" stroke="#a03010" stroke-width="1.1" stroke-linejoin="round"/></svg>
<svg class="a" style="left:1056px;top:195px" width="18" height="14" viewBox="0 0 18 14"><path d="M10 0.5H17.5L12.5 5H16.5L3.5 13.5L8 7H4Z" fill="#f5d020" stroke="#a03010" stroke-width="1.1" stroke-linejoin="round"/></svg>
<svg class="a" style="left:1056px;top:221px" width="18" height="14" viewBox="0 0 18 14"><path d="M10 0.5H17.5L12.5 5H16.5L3.5 13.5L8 7H4Z" fill="#f5d020" stroke="#a03010" stroke-width="1.1" stroke-linejoin="round"/></svg>
<div class="a" style="left:1053px;top:183px;white-space:nowrap;font-size:10px;font-weight:bold;color:#1a1a2a;line-height:10px;letter-spacing:0px">Max</div>
<div class="a" style="left:1054px;top:209px;white-space:nowrap;font-size:9px;font-weight:bold;color:#1a1a2a;line-height:9px">4</div>
<svg class="a" style="left:1061px;top:210px" width="12" height="7" viewBox="0 0 12 7"><path d="M1 5Q3 0 6 3Q9 6 11 1" fill="none" stroke="#1a1a2a" stroke-width="1.3"/></svg>
<div class="a" style="left:1054px;top:235px;white-space:nowrap;font-size:10px;font-weight:bold;color:#1a1a2a;line-height:10px">Min</div>
<svg class="a" style="left:1055px;top:247px" width="18" height="17" viewBox="0 0 18 17"><rect x="0.8" y="0.8" width="16" height="12" fill="#3ad0f0" stroke="#223" stroke-width="1.4"/><circle cx="9" cy="7" r="4" fill="#fff" stroke="#223"/><path d="M9 7L7 5M9 7L11 5M9 7V10" stroke="#223"/><path d="M5 16H13L9 13Z" fill="#2a2ab0"/></svg>
<div class="a" style="left:1052.5px;top:277.5px;width:22px;height:13px;background:#fff;border:1px solid #222;box-shadow:1px 1px 0 #666"></div>
<div class="a" style="left:1054px;top:279.0px;white-space:nowrap;font-family:'Liberation Serif',serif;font-weight:bold;font-size:10px;color:#111;line-height:10px;letter-spacing:-0.3px">ABC</div>
<svg class="a" style="left:1052px;top:292.5px" width="4" height="4" viewBox="0 0 4 4"><path d="M0 0H4V4Z" fill="#222" transform="rotate(90 2 2)"/></svg>
<div class="a" style="left:1052.5px;top:304.5px;width:22px;height:13px;background:#fff;border:1px solid #222;box-shadow:1px 1px 0 #666"></div>
<div class="a" style="left:1054px;top:306.0px;white-space:nowrap;font-family:'Liberation Serif',serif;font-weight:bold;font-size:8.5px;color:#111;line-height:10px;letter-spacing:-0.6px">Simu</div>
<svg class="a" style="left:1052px;top:319.5px" width="4" height="4" viewBox="0 0 4 4"><path d="M0 0H4V4Z" fill="#222" transform="rotate(90 2 2)"/></svg>
<svg class="a" style="left:1052px;top:325px" width="24" height="19" viewBox="0 0 24 19"><path d="M12 1Q6 3 6 10L3 15H21L18 10Q18 3 12 1Z" fill="#e02020" stroke="#901010" stroke-width="0.8"/><circle cx="12" cy="17" r="2" fill="#901010"/><path d="M1 12L3 10M23 12L21 10" stroke="#888"/></svg>
<svg class="a" style="left:1054px;top:353px" width="19" height="15" viewBox="0 0 19 15"><path d="M0.8 0.8H14L18 4V14H0.8Z" fill="#fff" stroke="#555" stroke-width="1.3"/><path d="M3 6H15M3 9H15M3 12H15" stroke="#777" stroke-dasharray="2 1"/></svg>
<svg class="a" style="left:1053px;top:375px" width="24" height="23" viewBox="0 0 24 23"><rect x="1" y="1" width="13" height="10" fill="#777"/><rect x="3" y="6" width="14" height="10" fill="#999" stroke="#eee"/><rect x="6" y="11" width="14" height="11" fill="#888" stroke="#eee"/><text x="17" y="9" font-size="10" font-family="Liberation Sans" font-weight="bold" fill="#666">?</text></svg>
<svg class="a" style="left:1055px;top:405px" width="19" height="19" viewBox="0 0 19 19"><circle cx="9.5" cy="9.5" r="9" fill="#a0a0a0"/><path d="M5 5L14 14M14 5L5 14" stroke="#fff" stroke-width="2.8"/></svg>
<svg class="a" style="left:1053px;top:428px" width="22" height="19" viewBox="0 0 22 19"><path d="M1 1V18H21" stroke="#888" stroke-width="1.5" fill="none"/><rect x="4" y="4" width="3" height="13" fill="#999"/><rect x="9" y="10" width="3" height="7" fill="#999"/><rect x="14" y="6" width="3" height="11" fill="#999"/><rect x="18" y="11" width="2" height="6" fill="#999"/></svg>
<div class="a" style="left:0px;top:890px;width:1080px;height:2px;background:#f0f0f0"></div>
<div class="a" style="left:0px;top:892px;width:995px;height:14px;background:#f0f0f0;border-top:2px solid #a8a8a8;border-right:2px solid #fff;border-left:1px solid #a8a8a8"></div>
<div class="a" style="left:4px;top:894px;white-space:nowrap;font-size:9.6px;color:#000;line-height:11px;-webkit-text-stroke:0.25px #000">X: 25057</div>
<div class="a" style="left:49px;top:894px;white-space:nowrap;font-size:9.6px;color:#000;line-height:11px;-webkit-text-stroke:0.25px #000">Y: 11281 (Zoom Level: 27)</div>
<div class="a" style="left:997px;top:892px;width:80px;height:14px;background:#f0f0f0;border-top:2px solid #a8a8a8;border-left:1px solid #a8a8a8;border-right:2px solid #fff"></div>
<div class="a" style="left:1000px;top:894px;white-space:nowrap;font-size:9.6px;color:#000;line-height:11px;-webkit-text-stroke:0.25px #000">Base</div>
<svg class="a" style="left:0;top:0" width="1080" height="906" viewBox="0 0 1080 906"><line x1="82" y1="286.5" x2="815" y2="286.5" stroke="#a80606" stroke-width="3" /><line x1="88.5" y1="288" x2="88.5" y2="413" stroke="#000" stroke-width="2.3" /><rect x="72.5" y="413" width="33" height="33" stroke="#ff00ff" stroke-width="2.3" fill="none" rx="1.2"/><circle cx="96.5" cy="421" r="4" stroke="#ff00ff" stroke-width="2" fill="none"/><line x1="262.5" y1="288" x2="262.5" y2="411.5" stroke="#000" stroke-width="2.3" /><rect x="257.5" y="411.5" width="10" height="9.5" stroke="#000" stroke-width="2.3" fill="none" rx="0"/><line x1="262.5" y1="421" x2="262.5" y2="467" stroke="#000" stroke-width="2.3" /><line x1="262.5" y1="467" x2="262.5" y2="479" stroke="#ee0000" stroke-width="2.3" /><line x1="253" y1="479" x2="272" y2="479" stroke="#ee0000" stroke-width="2.3" /><line x1="253" y1="485.5" x2="272" y2="485.5" stroke="#ee0000" stroke-width="2.3" /><line x1="262.5" y1="485.5" x2="262.5" y2="497" stroke="#ee0000" stroke-width="2.3" /><line x1="262.5" y1="497" x2="262.5" y2="538" stroke="#000" stroke-width="2.3" /><circle cx="262.5" cy="551.7" r="14" stroke="#000" stroke-width="2.3" fill="none"/><rect x="432.5" y="152.5" width="12" height="12" stroke="#000" stroke-width="2.3" fill="none" rx="0"/><path d="M434.5 164 A4 4 0 0 1 442.5 164 Z" stroke="#000" stroke-width="1" fill="#000" /><line x1="438.5" y1="164.5" x2="438.5" y2="207.5" stroke="#000" stroke-width="2.3" /><rect x="434.5" y="207.5" width="8" height="22.5" stroke="#000" stroke-width="2" fill="none" rx="1.5"/><line x1="438.5" y1="230" x2="438.5" y2="285" stroke="#000" stroke-width="2.3" /><line x1="438" y1="288" x2="438" y2="409.5" stroke="#000" stroke-width="2.3" /><rect x="432.5" y="409.5" width="10.5" height="9" stroke="#000" stroke-width="2.3" fill="none" rx="0"/><line x1="438" y1="418.5" x2="438" y2="455" stroke="#000" stroke-width="2.3" /><circle cx="438" cy="466" r="11" stroke="#000" stroke-width="2.3" fill="none"/><circle cx="438" cy="479.5" r="10.5" stroke="#000" stroke-width="2.3" fill="none"/><line x1="438" y1="490" x2="438" y2="519" stroke="#000" stroke-width="2.3" /><line x1="438" y1="519" x2="438" y2="555" stroke="#ee0000" stroke-width="2.3" /><rect x="434.5" y="524.5" width="7" height="19" stroke="#ee0000" stroke-width="2" fill="none" rx="1.5"/><rect x="436.8" y="527.5" width="2.4" height="13" stroke="#fff" stroke-width="0" fill="#fff" rx="0"/><line x1="421" y1="556.5" x2="607" y2="556.5" stroke="#000" stroke-width="3" /><line x1="426.5" y1="558" x2="426.5" y2="710" stroke="#000" stroke-width="2.3" /><rect x="413.5" y="709.5" width="27.5" height="27" stroke="#ff00ff" stroke-width="2.3" fill="none" rx="1.5"/><circle cx="427.1" cy="723" r="12" stroke="#ff00ff" stroke-width="2.3" fill="none"/><line x1="557" y1="558" x2="557" y2="611" stroke="#000" stroke-width="2.3" /><rect x="554.5" y="611.5" width="5.5" height="17" stroke="#000" stroke-width="2" fill="none" rx="1.5"/><line x1="557" y1="629" x2="557" y2="652.5" stroke="#000" stroke-width="2.3" /><rect x="541" y="652.5" width="33" height="44" stroke="#000" stroke-width="2.2" fill="none" rx="1.5"/><line x1="557" y1="652.5" x2="557" y2="691" stroke="#000" stroke-width="2.2" /><path d="M545 669.8879999999999 C547 665.588 550 665.088 553 669.088 Q557.25 670.8879999999999 561.5 669.088 C564.5 665.088 567.5 665.588 569.5 669.8879999999999" stroke="#000" stroke-width="2" fill="none" stroke-linecap="round"/><path d="M545 685.992 C547 681.692 550 681.192 553 685.192 Q557.25 686.992 561.5 685.192 C564.5 681.192 567.5 681.692 569.5 685.992" stroke="#000" stroke-width="2" fill="none" stroke-linecap="round"/><path d="M541 669 H486 V811.5" stroke="#000" stroke-width="2" fill="none" /><rect x="470" y="811.5" width="32.5" height="43.5" stroke="#000" stroke-width="2.2" fill="none" rx="1.5"/><line x1="486" y1="811.5" x2="486" y2="849" stroke="#000" stroke-width="2.2" /><path d="M474 828.6995 C476 824.3995 479 823.8995 482 827.8995 Q486.0 829.6995 490.0 827.8995 C493.0 823.8995 496.0 824.3995 498.0 828.6995" stroke="#000" stroke-width="2" fill="none" stroke-linecap="round"/><path d="M474 844.6205 C476 840.3205 479 839.8205 482 843.8205 Q486.0 845.6205 490.0 843.8205 C493.0 839.8205 496.0 840.3205 498.0 844.6205" stroke="#000" stroke-width="2" fill="none" stroke-linecap="round"/><line x1="574" y1="669.2" x2="667" y2="669.2" stroke="#007b7b" stroke-width="2.2" stroke-dasharray="15 5 9 5 21 4 10 5 20"/><line x1="667" y1="668.2" x2="667" y2="723" stroke="#000" stroke-width="2.3" /><path d="M657 692 C658 696 661 696 661.7 692.5 C662.5 696 666 696 666.7 694 C667.5 696 671 696 671.7 692.5 C672.5 696 676 696 676.5 692" stroke="#000" stroke-width="1.9" fill="none" stroke-linecap="round"/><path d="M657 701 C658 697 661 697 661.7 700.5 C662.5 697 666 697 666.7 699 C667.5 697 671 697 671.7 700.5 C672.5 697 676 697 676.5 701" stroke="#000" stroke-width="1.9" fill="none" stroke-linecap="round"/><line x1="667" y1="723" x2="667" y2="806.5" stroke="#22dd22" stroke-width="2.4" stroke-dasharray="19 4 14 3 5 7 31"/><rect x="650.5" y="806.5" width="33" height="44" stroke="#000" stroke-width="2.2" fill="none" rx="1.5"/><line x1="667" y1="806.5" x2="667" y2="845" stroke="#000" stroke-width="2.2" /><path d="M654.5 823.8879999999999 C656.5 819.588 659.5 819.088 662.5 823.088 Q666.75 824.8879999999999 671.0 823.088 C674.0 819.088 677.0 819.588 679.0 823.8879999999999" stroke="#000" stroke-width="2" fill="none" stroke-linecap="round"/><path d="M654.5 839.992 C656.5 835.692 659.5 835.192 662.5 839.192 Q666.75 840.992 671.0 839.192 C674.0 835.192 677.0 835.692 679.0 839.992" stroke="#000" stroke-width="2" fill="none" stroke-linecap="round"/><line x1="695" y1="288" x2="695" y2="331" stroke="#000" stroke-width="2.3" /><path d="M695 331 L700 333 L688 336 L701 339 L692 342 L695 343 V350" stroke="#000" stroke-width="2.2" fill="none" stroke-linejoin="round"/><path d="M695 350 C703 350 701 357 693 357 C687 357 689 353 695 354 C703 355 701 362 693 362 C687 362 689 358 695 359 C703 361 700 369 695 372" stroke="#000" stroke-width="2.2" fill="none" /><line x1="695" y1="372" x2="695" y2="466" stroke="#000" stroke-width="2.3" /><line x1="607" y1="466.5" x2="815" y2="466.5" stroke="#000" stroke-width="3" /><line x1="640" y1="468" x2="640" y2="516.5" stroke="#000" stroke-width="2.3" /><circle cx="640" cy="519.5" r="13.3" stroke="#000" stroke-width="2.3" fill="none"/><path d="M631 516.5 H650 L640.5 528 Z" stroke="#000" stroke-width="2" fill="none" stroke-linejoin="round"/><line x1="793.3" y1="467.5" x2="793.3" y2="540" stroke="#000" stroke-width="2.3" /><path d="M793.3 540 V569.5" stroke="#000" stroke-width="2.2" fill="none" /><path d="M789 546 L798 540.5 M789 550 L798 544.5 M789 554 L798 548.5" stroke="#000" stroke-width="2" fill="none" stroke-linecap="round"/><circle cx="793.3" cy="557.5" r="2.5" stroke="#000" stroke-width="1.8" fill="#000"/><path d="M789 569.5 L797.5 562" stroke="#000" stroke-width="2" fill="none" stroke-linecap="round"/><line x1="793.3" y1="569.5" x2="793.3" y2="583" stroke="#007b7b" stroke-width="2.2" /><line x1="793.3" y1="583" x2="793.3" y2="613.5" stroke="#ee0000" stroke-width="2.2" /><rect x="790" y="588.3" width="6.5" height="19.2" stroke="#ee0000" stroke-width="2.2" fill="none" rx="1.5"/><rect x="792.3" y="591.5" width="2.1" height="12.5" stroke="#fff" stroke-width="0" fill="#fff" rx="0"/><line x1="793.3" y1="613.5" x2="793.3" y2="632" stroke="#007b7b" stroke-width="2.2" /><line x1="793.3" y1="632" x2="793.3" y2="640" stroke="#000" stroke-width="2.2" /><path d="M793.3 640 L798.5 641.5 L787.5 644.5 L799.5 647.5 L790 650.5 L793 652 V656.5" stroke="#000" stroke-width="2.2" fill="none" stroke-linejoin="round"/><path d="M793.3 656.5 C799 657 798 663.5 791.5 663.5 C786.5 663.5 788 659.5 793.3 660.5 C799 661.5 798 668.5 791.5 668.5 C786.5 668.5 788 664.5 793.3 665.5 C799 666.5 799 674 793.3 676.5 V685" stroke="#000" stroke-width="2.2" fill="none" /><line x1="793.3" y1="685" x2="793.3" y2="774" stroke="#007b7b" stroke-width="2.3" stroke-dasharray="20 3.5 10 4 12 6.5 6 7.5 20"/><line x1="776.5" y1="724.2" x2="821" y2="724.2" stroke="#b81010" stroke-width="2" /><line x1="793.3" y1="774" x2="793.3" y2="782" stroke="#000" stroke-width="2.2" /><path d="M779.5 782 H807 L793.2 799 Z" stroke="#000" stroke-width="2.2" fill="none" stroke-linejoin="round"/><g fill="#e01e2e" font-family="Liberation Mono" font-size="13.2px"><text transform="translate(450.3,180.2) scale(0.9,1)" letter-spacing="0.891px">0.877 kA -1058.2 deg</text><text transform="translate(450.3,195.1) scale(0.9,1)" letter-spacing="0.891px">0.775 kA -746.4 deg</text><text transform="translate(450.3,210.2) scale(0.9,1)" letter-spacing="0.891px">16.661 kA 3434.2 deg</text><path d="M446.59999999999997 170.4 V177.79999999999998" stroke="#000" stroke-width="1.7"/><path d="M443.99999999999994 175.6 L446.59999999999997 180.99999999999997 L449.2 175.6 Z" fill="#000"/><text transform="translate(450.3,246.0) scale(0.9,1)" letter-spacing="0.891px">0.877 kA 956.2 deg</text><text transform="translate(450.3,261.0) scale(0.9,1)" letter-spacing="0.891px">0.775 kA 625.5 deg</text><text transform="translate(450.3,276.1) scale(0.9,1)" letter-spacing="0.891px">16.661 kA 179.98 deg</text><path d="M446.59999999999997 269.6 V277.0" stroke="#000" stroke-width="1.7"/><path d="M443.99999999999994 274.8 L446.59999999999997 280.2 L449.2 274.8 Z" fill="#000"/><text transform="translate(99.89999999999999,302.0) scale(0.9,1)" letter-spacing="0.891px">0.014 kA 151.63 deg</text><text transform="translate(99.89999999999999,317.0) scale(0.9,1)" letter-spacing="0.891px">0.012 kA 172.5 deg</text><text transform="translate(99.89999999999999,331.8) scale(0.9,1)" letter-spacing="0.891px">0.026 kA 180 deg</text><path d="M96.2 302.59999999999997 V295.2" stroke="#000" stroke-width="1.7"/><path d="M93.60000000000001 297.4 L96.2 292.0 L98.8 297.4 Z" fill="#000"/><text transform="translate(274.90000000000003,302.0) scale(0.9,1)" letter-spacing="0.891px">0.168 kA 0 deg</text><text transform="translate(274.90000000000003,317.0) scale(0.9,1)" letter-spacing="0.891px">0.166 kA 0 deg</text><text transform="translate(274.90000000000003,331.8) scale(0.9,1)" letter-spacing="0.891px">0.269 kA 0 deg</text><path d="M271.2 302.59999999999997 V295.2" stroke="#000" stroke-width="1.7"/><path d="M268.59999999999997 297.4 L271.2 292.0 L273.8 297.4 Z" fill="#000"/><text transform="translate(450.3,302.0) scale(0.9,1)" letter-spacing="0.891px">0.661 kA -785 deg</text><text transform="translate(450.3,317.0) scale(0.9,1)" letter-spacing="0.891px">0.588 kA -648.4 deg</text><text transform="translate(450.3,331.8) scale(0.9,1)" letter-spacing="0.891px">1.248 kA 180 deg</text><path d="M446.59999999999997 302.59999999999997 V295.2" stroke="#000" stroke-width="1.7"/><path d="M443.99999999999994 297.4 L446.59999999999997 292.0 L449.2 297.4 Z" fill="#000"/><text transform="translate(706.9,302.0) scale(0.9,1)" letter-spacing="0.891px">0.054 kA 87.31 deg</text><text transform="translate(706.9,317.0) scale(0.9,1)" letter-spacing="0.891px">0.05 kA 123.86 deg</text><text transform="translate(706.9,331.8) scale(0.9,1)" letter-spacing="0.891px">0.104 kA 180 deg</text><path d="M703.1999999999999 302.59999999999997 V295.2" stroke="#000" stroke-width="1.7"/><path d="M700.5999999999999 297.4 L703.1999999999999 292.0 L705.8 297.4 Z" fill="#000"/><text transform="translate(706.9,427.20000000000005) scale(0.9,1)" letter-spacing="0.891px">0.054 kA 94.69 deg</text><text transform="translate(706.9,442.1) scale(0.9,1)" letter-spacing="0.891px">0.05 kA 57.85 deg</text><text transform="translate(706.9,457.0) scale(0.9,1)" letter-spacing="0.891px">0.104 kA 7.44 deg</text><path d="M703.1999999999999 460.9 V453.5" stroke="#000" stroke-width="1.7"/><path d="M700.5999999999999 455.7 L703.1999999999999 450.3 L705.8 455.7 Z" fill="#000"/><text transform="translate(652.1,483.1) scale(0.9,1)" letter-spacing="0.891px">0.054 kA 0 deg</text><text transform="translate(652.1,498.1) scale(0.9,1)" letter-spacing="0.891px">0.05 kA 0 deg</text><text transform="translate(652.1,513.0) scale(0.9,1)" letter-spacing="0.891px">0.104 kA 0 deg</text><path d="M648.4 483.7 V476.3" stroke="#000" stroke-width="1.7"/><path d="M645.8 478.5 L648.4 473.1 L651.0 478.5 Z" fill="#000"/><text transform="translate(450.3,516.3) scale(0.9,1)" letter-spacing="0.891px">17.283 kA 7169.7 deg</text><text transform="translate(450.3,531.3000000000001) scale(0.9,1)" letter-spacing="0.891px">8.185 kA -88.74 deg</text><text transform="translate(450.3,546.1) scale(0.9,1)" letter-spacing="0.891px">4.647 kA 1133.1 deg</text><path d="M446.59999999999997 550.0 V542.5999999999999" stroke="#000" stroke-width="1.7"/><path d="M443.99999999999994 544.8 L446.59999999999997 539.3999999999999 L449.2 544.8 Z" fill="#000"/><text transform="translate(569.1,571.7) scale(0.9,1)" letter-spacing="0.891px">0 kA 0 deg</text><text transform="translate(569.1,586.7) scale(0.9,1)" letter-spacing="0.891px">0 kA 0 deg</text><text transform="translate(569.1,601.5) scale(0.9,1)" letter-spacing="0.891px">0 kA 0 deg</text><path d="M565.4 561.9 V569.3000000000001" stroke="#000" stroke-width="1.7"/><path d="M562.8 567.1 L565.4 572.5000000000001 L568.0 567.1 Z" fill="#000"/><text transform="translate(678.8000000000001,766.5) scale(0.9,1)" letter-spacing="0.891px">0 kA 0 deg</text><text transform="translate(678.8000000000001,781.4) scale(0.9,1)" letter-spacing="0.891px">0 kA 0 deg</text><text transform="translate(678.8000000000001,796.3000000000001) scale(0.9,1)" letter-spacing="0.891px">0 kA 0 deg</text><path d="M675.1 756.6999999999999 V764.1" stroke="#000" stroke-width="1.7"/><path d="M672.5 761.9 L675.1 767.3000000000001 L677.7 761.9 Z" fill="#000"/><text transform="translate(805.1,586.5) scale(0.9,1)" letter-spacing="0.891px">1.661 kA 270.35 deg</text><text transform="translate(805.1,601.5) scale(0.9,1)" letter-spacing="0.891px">0 kA 0 deg</text><text transform="translate(805.1,616.4) scale(0.9,1)" letter-spacing="0.891px">0 kA 0 deg</text><path d="M801.4 576.6999999999999 V584.1" stroke="#000" stroke-width="1.7"/><path d="M798.8 581.9 L801.4 587.3000000000001 L804.0 581.9 Z" fill="#000"/><text transform="translate(804.8000000000001,684.5) scale(0.9,1)" letter-spacing="0.891px">1.661 kA 180 deg</text><text transform="translate(804.8000000000001,699.4) scale(0.9,1)" letter-spacing="0.891px">0 kA 0 deg</text><text transform="translate(804.8000000000001,714.3000000000001) scale(0.9,1)" letter-spacing="0.891px">0 kA 0 deg</text><path d="M801.1 707.8 V715.2" stroke="#000" stroke-width="1.7"/><path d="M798.5 713.0 L801.1 718.4000000000001 L803.7 713.0 Z" fill="#000"/><text transform="translate(804.8000000000001,739.8000000000001) scale(0.9,1)" letter-spacing="0.891px">0 kA 0 deg</text><text transform="translate(804.8000000000001,754.6) scale(0.9,1)" letter-spacing="0.891px">0 kA 0 deg</text><text transform="translate(804.8000000000001,769.6) scale(0.9,1)" letter-spacing="0.891px">0 kA 0 deg</text><path d="M801.1 740.4000000000001 V733.0" stroke="#000" stroke-width="1.7"/><path d="M798.5 735.2 L801.1 729.8 L803.7 735.2 Z" fill="#000"/></g><g fill="#e01e2e" font-family="Liberation Mono" font-size="15px" letter-spacing="1.447px"><text transform="translate(806,227.4) rotate(-15) scale(0.85,1)" x="0.6" y="0">105 % -26.37 deg</text><text transform="translate(806,243.8) rotate(-15) scale(0.85,1)" x="0.6" y="0">0 % -148.47 deg</text><text transform="translate(806,260.2) rotate(-15) scale(0.85,1)" x="0.6" y="0">103.1 % 85.6 deg</text><text transform="translate(847,354.6) rotate(15) scale(0.85,1)" x="0.6" y="0">0 kA 0 deg</text><text transform="translate(847,371.0) rotate(15) scale(0.85,1)" x="0.6" y="0">18.476 kA 127.24 deg</text><text transform="translate(847,387.40000000000003) rotate(15) scale(0.85,1)" x="0.6" y="0">0 kA -7.96 deg</text></g></svg>
</body></html>
